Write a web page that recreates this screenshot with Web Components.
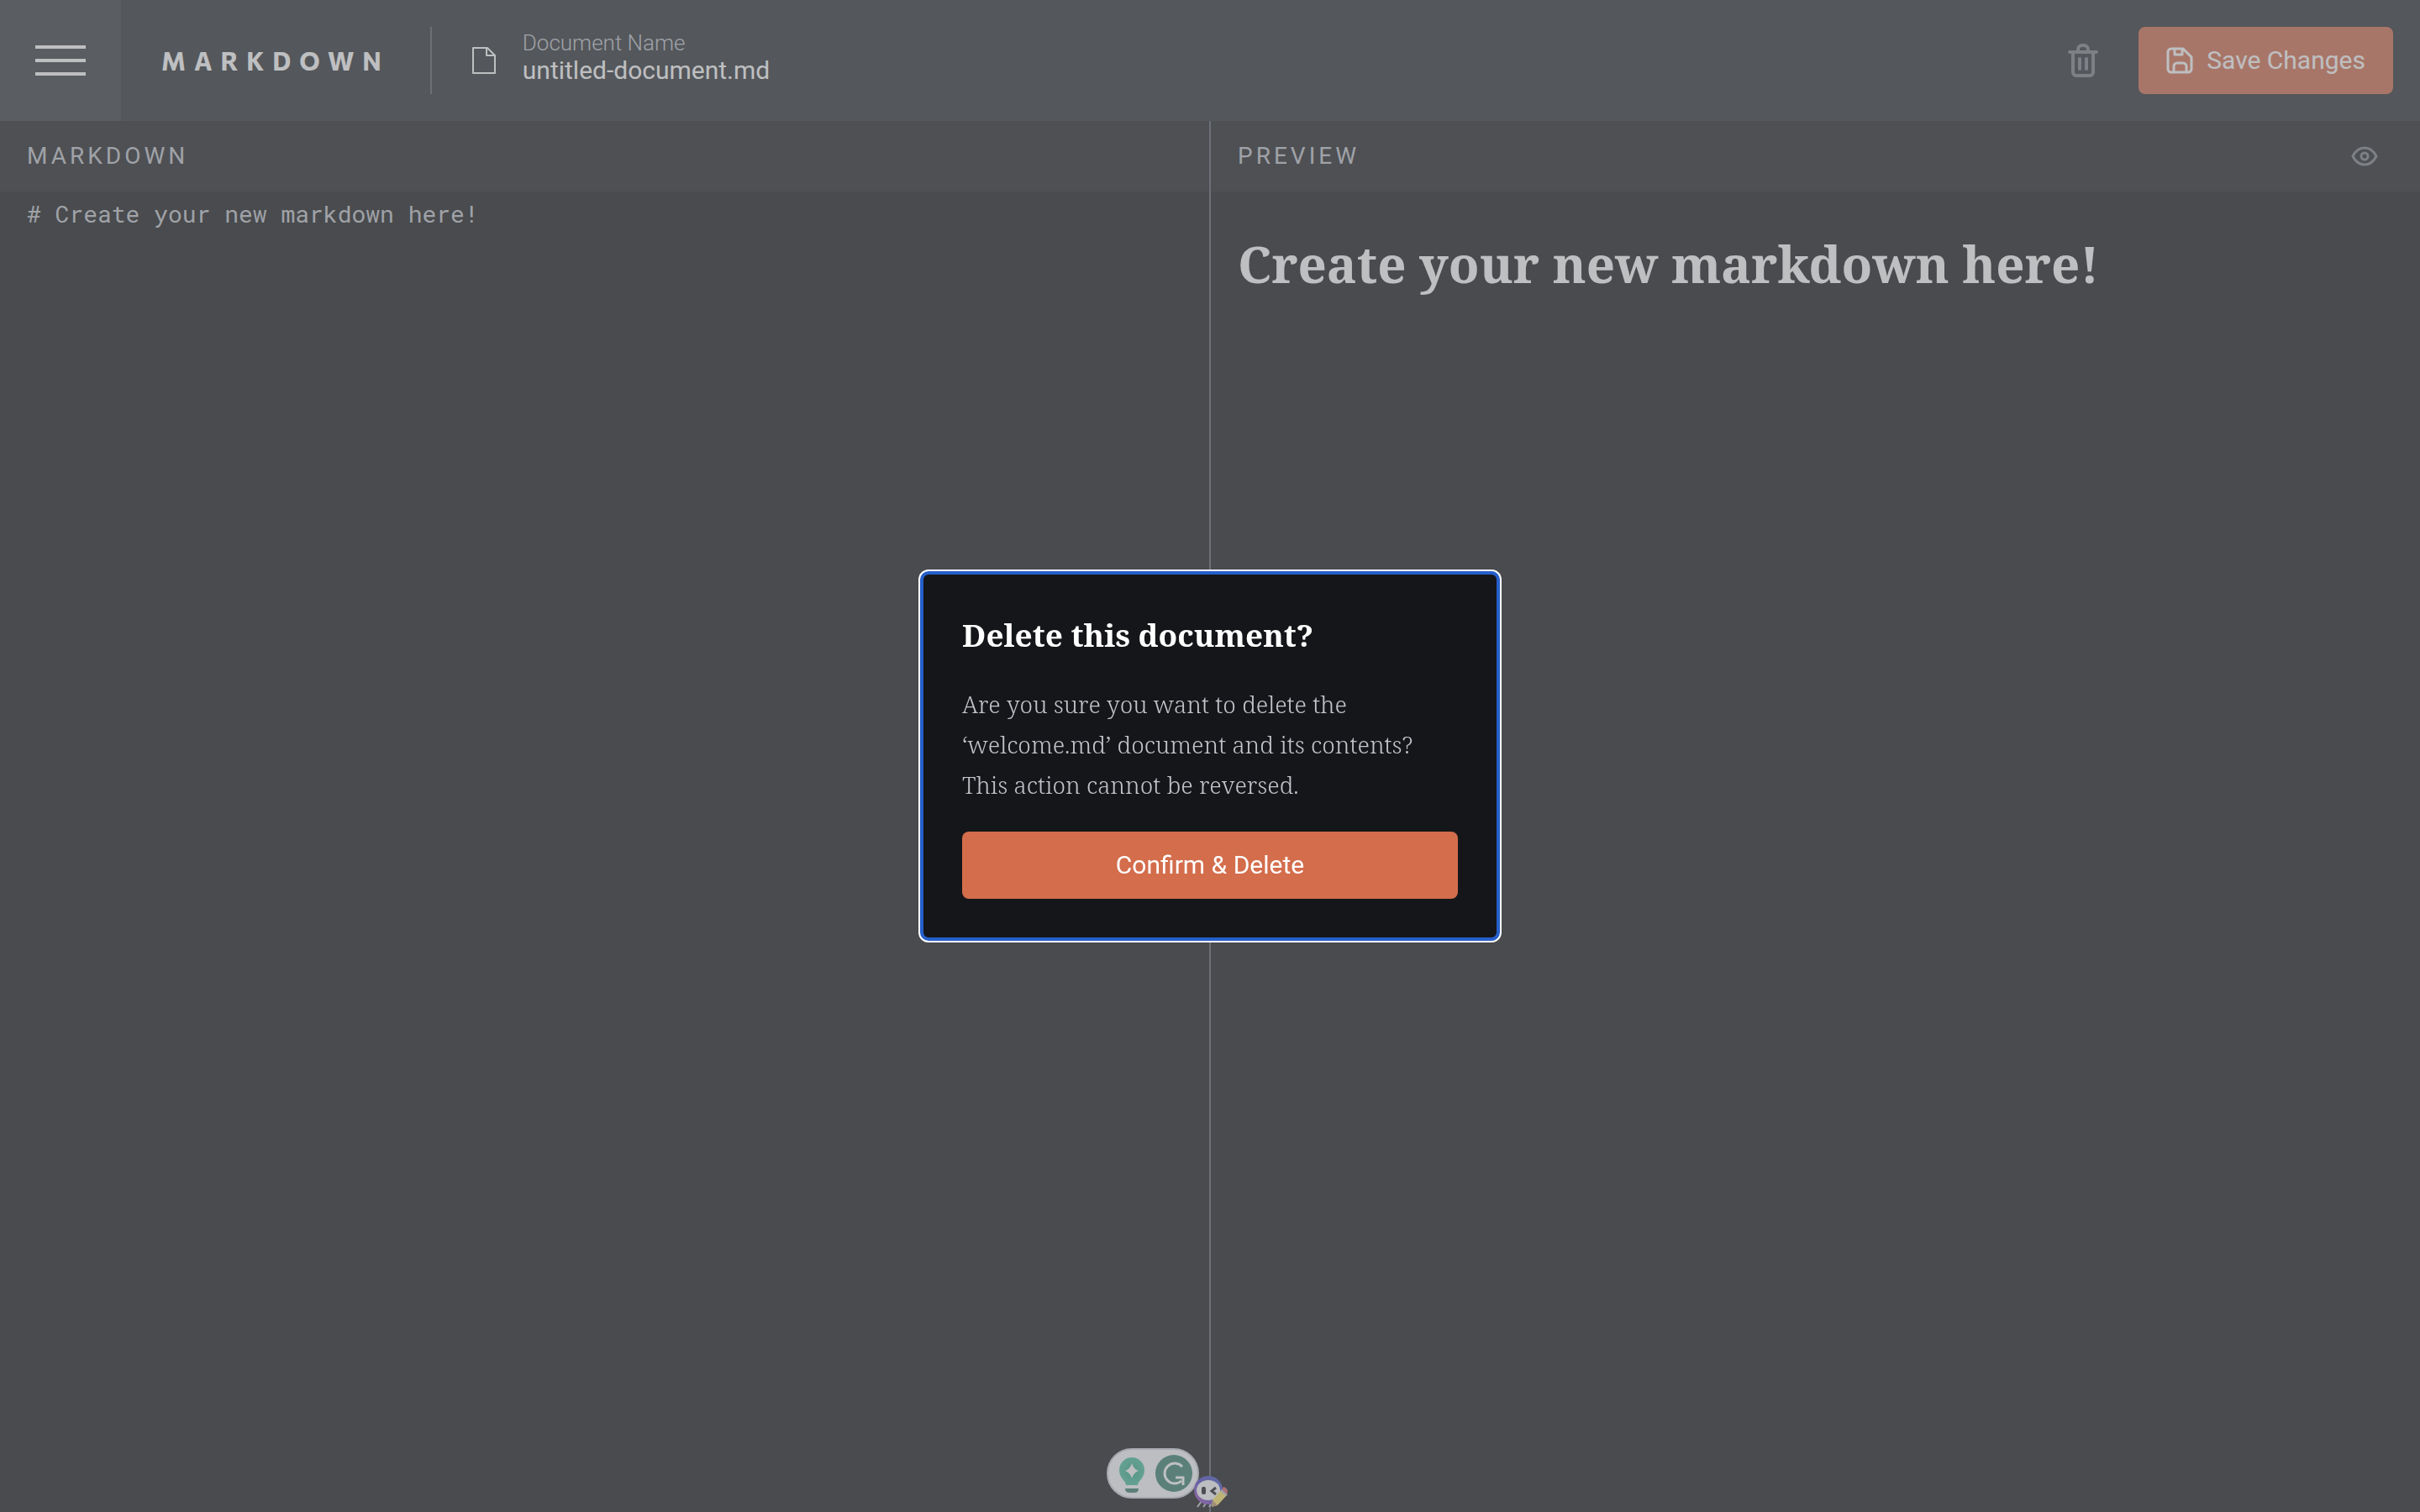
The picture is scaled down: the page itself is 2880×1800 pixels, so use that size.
<!DOCTYPE html>
<html lang="en">
<head>
<meta charset="utf-8">
<meta name="viewport" content="width=device-width, initial-scale=1">
<title>Markdown editor</title>
<style>
  :root {
    --surface: #151619;
    --surface-bar: #1f2124;
    --surface-header: #2b2e33;
    --surface-menu: #363a3f;
    --line: #5a5f67;
    --muted: #7d8187;
    --soft: #c1c4ca;
    --accent: #d36d4c;
    --sans: Roboto, "Liberation Sans", sans-serif;
    --slab: "Noto Serif", "DejaVu Serif", serif;
    --mono: "Roboto Mono", "Liberation Mono", monospace;
  }
  body { margin: 0; background: var(--surface); color: #fff; font-family: var(--sans); }
</style>
</head>
<body>
<md-app></md-app>

<script>
class Base extends HTMLElement {
  constructor() {
    super();
    this.attachShadow({ mode: "open" }).innerHTML =
      "<style>*{box-sizing:border-box}button{font:inherit;color:inherit;border:0;padding:0;background:none;cursor:pointer}svg{display:block}</style>" + this.render();
  }
}

/* Top bar: menu, logo, document name, delete and save */
customElements.define("app-header", class extends Base {
  render() { return `
    <style>
      :host { display: flex; align-items: center; height: 144px; background: var(--surface-header); flex: none; }
      .menu { width: 144px; height: 144px; background: var(--surface-menu); display: grid; place-items: center; }
      .logo { margin: 0 0 0 48px; padding-right: 48px; font: 700 30px/36px Commissioner, "Open Sans", var(--sans); letter-spacing: 10px; }
      .rule { width: 2px; height: 80px; background: var(--line); margin-right: 48px; }
      .actions { display: flex; align-items: center; gap: 48px; margin-left: auto; padding-right: 32px; }
      .save { display: flex; align-items: center; gap: 16px; height: 80px; padding: 0 33px; border-radius: 8px; background: var(--accent); font-size: 30px; line-height: 36px; }
    </style>
    <button class="menu" aria-label="Open menu">
      <svg width="60" height="36" fill="#fff"><path d="M0 0h60v4H0zM0 16h60v4H0zM0 32h60v4H0z"/></svg>
    </button>
    <h1 class="logo">MARKDOWN</h1>
    <span class="rule"></span>
    <doc-name></doc-name>
    <div class="actions">
      <button aria-label="Delete document">
        <svg width="36" height="40" fill="none" stroke="#7d8187" stroke-width="4" stroke-linecap="round" stroke-linejoin="round">
          <path d="M2 10h32M6 10v24a4 4 0 0 0 4 4h16a4 4 0 0 0 4-4V10M12 10V7a5 5 0 0 1 5-5h2a5 5 0 0 1 5 5v3M14 18v12M22 18v12"/>
        </svg>
      </button>
      <button class="save">
        <svg width="32" height="32" fill="none" stroke="#fff" stroke-width="3" stroke-linejoin="round">
          <path d="M2 6a4 4 0 0 1 4-4H20L30 12V26a4 4 0 0 1-4 4H6a4 4 0 0 1-4-4ZM10 2V9H19V2M9 30V23a4 4 0 0 1 4-4h7a4 4 0 0 1 4 4v7"/>
        </svg>
        Save Changes
      </button>
    </div>`; }
});

customElements.define("doc-name", class extends Base {
  render() { return `
    <style>
      :host { display: flex; align-items: center; gap: 32px; }
      .field { display: flex; flex-direction: column; padding-bottom: 6px; }
      label { font-weight: 300; font-size: 26px; line-height: 30px; color: var(--soft); }
      input { all: unset; width: 480px; height: 36px; font-size: 30px; line-height: 36px; color: #fff; }
    </style>
    <svg width="28" height="32" fill="none" stroke="#fff" stroke-width="2" stroke-linejoin="round">
      <path d="M1 1H18L27 10V31H1ZM17 1V10H27"/>
    </svg>
    <div class="field">
      <label for="name">Document Name</label>
      <input id="name" value="untitled-document.md" spellcheck="false">
    </div>`; }
});

/* One half of the editor: titled bar, optional tools, content */
customElements.define("md-pane", class extends Base {
  render() { return `
    <style>
      :host { display: flex; flex-direction: column; flex: 1; min-width: 0; }
      .bar { display: flex; align-items: center; justify-content: space-between; height: 84px; padding: 0 32px; background: var(--surface-bar); }
      h2 { margin: 0; font-weight: 400; font-size: 28px; line-height: 34px; letter-spacing: 4px; color: var(--soft); }
      .body { flex: 1; display: flex; flex-direction: column; padding: 8px 32px; }
    </style>
    <div class="bar"><h2><slot name="title"></slot></h2><slot name="tools"></slot></div>
    <div class="body"><slot></slot></div>`; }
});

customElements.define("md-source", class extends Base {
  render() { return `
    <style>
      :host { display: flex; flex: 1; }
      textarea { flex: 1; border: 0; padding: 0; margin: 0; outline: 0; resize: none; background: none; color: var(--soft); font: 400 28px/37px var(--mono); }
    </style>
    <textarea aria-label="Markdown" spellcheck="false"># Create your new markdown here!</textarea>`; }
});

customElements.define("md-preview", class extends Base {
  render() { return `
    <style>
      :host { display: block; }
      h1 { margin: 32px 0; font: 700 60px/92px var(--slab); }
    </style>
    <h1>Create your new markdown here!</h1>`; }
});

customElements.define("preview-toggle", class extends Base {
  render() { return `
    <style>
      :host { display: block; }
      button { display: grid; place-items: center; width: 68px; height: 68px; }
    </style>
    <button aria-label="Toggle preview">
      <svg width="32" height="24" fill="none" stroke="#7d8187" stroke-width="3">
        <path d="M2 12C5 6 10 2 16 2S27 6 30 12C27 18 22 22 16 22S5 18 2 12Z" stroke-linejoin="round"/><circle cx="16" cy="12" r="4"/>
      </svg>
    </button>`; }
});

/* Floating writing assistant, over the seam of the two panes */
customElements.define("writing-assistant", class extends Base {
  render() { return `
    <style>:host { position: fixed; bottom: 4px; left: calc(50% - 124px); }</style>
    <svg width="148" height="76" role="img" aria-label="Writing assistant">
      <defs>
        <linearGradient id="ring" x1="0" y1="1" x2="1" y2="0"><stop offset="0" stop-color="#b052b8"/><stop offset=".45" stop-color="#5142c8"/><stop offset="1" stop-color="#3b58c4"/></linearGradient>
        <radialGradient id="glow"><stop offset="0" stop-color="#38ab8c"/><stop offset="1" stop-color="#48c3a0"/></radialGradient>
      </defs>
      <rect x="2" y="5" width="108" height="58" rx="29" fill="#fbfcfe" stroke="#d0d2de" stroke-width="2"/>
      <path d="M24 48c0-5-8-8-8-18a15 15 0 0 1 30 0c0 10-8 13-8 18Z" fill="url(#glow)"/>
      <path d="M31 22q2 7 8 9-6 2-8 9-2-7-8-9 6-2 8-9Z" fill="#fff"/>
      <path d="M23 52H39q0 5-5 5H28q-5 0-5-5Z" fill="#38806f"/>
      <circle cx="81" cy="34" r="22" fill="#38806f"/>
      <path d="M91 26a12 12 0 1 0-1 17" fill="none" stroke="#fff" stroke-width="3"/>
      <path d="M83 39H92V48" fill="none" stroke="#fff" stroke-width="3"/>
      <path d="M114 67l-5 7M121 67l-5 7M127 68l-4 6" stroke="#c6c6cc" stroke-width="2"/>
      <circle cx="122" cy="54" r="17" fill="url(#ring)"/>
      <ellipse cx="122" cy="54" rx="14" ry="12" fill="#fbfbff"/>
      <rect x="114" y="50" width="5" height="9" rx="2" fill="#1c1c26"/>
      <path d="M131 51l-5 4 5 4" fill="none" stroke="#1c1c26" stroke-width="3"/>
      <path d="M126 74l1-8 10-12 7 6-11 12Z" fill="#ffe868"/>
      <path d="M126 74l1-8 6 6Z" fill="#c79a68"/>
      <path d="M136 55l2-2 7 6-2 2Z" fill="#c6c8d0"/>
      <path d="M138 53l2-3q4 1 5 5l-1 4Z" fill="#d8656f"/>
    </svg>`; }
});

customElements.define("confirm-dialog", class extends Base {
  render() { return `
    <style>
      :host { display: contents; }
      dialog { width: 686px; margin: auto; padding: 48px; border: 0; border-radius: 8px; background: var(--surface); color: #fff; outline: 4px solid #265fcb; outline-offset: -2px; box-shadow: 0 0 0 4px #fff; }
      dialog::backdrop { background: rgb(126 128 131 / 50%); }
      .stack { display: flex; flex-direction: column; gap: 32px; }
      h2 { margin: 0; font: 700 37px/52px var(--slab); }
      p { margin: 0; font: 300 28px/48px var(--slab); color: var(--soft); }
      button { height: 80px; border-radius: 8px; background: var(--accent); font-size: 30px; line-height: 36px; outline: 0; }
    </style>
    <dialog aria-labelledby="t" autofocus>
      <div class="stack">
        <h2 id="t">Delete this document?</h2>
        <p>Are you sure you want to delete the<br>‘welcome.md’ document and its contents?<br>This action cannot be reversed.</p>
        <button>Confirm &amp; Delete</button>
      </div>
    </dialog>`; }
  connectedCallback() { this.shadowRoot.querySelector("dialog").showModal(); }
});

customElements.define("md-app", class extends Base {
  render() { return `
    <style>
      :host { display: flex; flex-direction: column; height: 100vh; }
      main { display: flex; flex: 1; }
      .seam { width: 2px; background: var(--line); }
    </style>
    <app-header></app-header>
    <main>
      <md-pane><span slot="title">MARKDOWN</span><md-source></md-source></md-pane>
      <div class="seam"></div>
      <md-pane><span slot="title">PREVIEW</span><preview-toggle slot="tools"></preview-toggle><md-preview></md-preview></md-pane>
    </main>
    <writing-assistant></writing-assistant>
    <confirm-dialog></confirm-dialog>`; }
});
</script>
</body>
</html>
